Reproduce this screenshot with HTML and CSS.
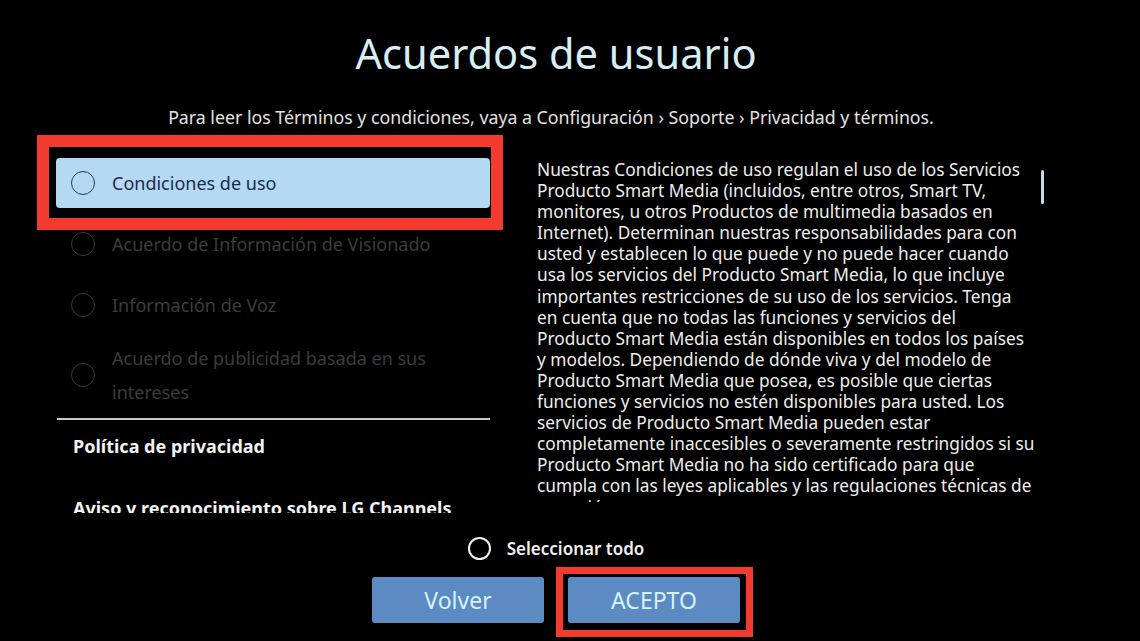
FILE: index.html
```html
<!DOCTYPE html>
<html lang="es">
<head>
  <meta charset="UTF-8">
  <meta name="viewport" content="width=device-width, initial-scale=1.0">
  <title>Acuerdos de usuario</title>
  <link rel="stylesheet" href="styles.css">
</head>
<body>
  <div class="screen">
    <h1 class="title">Acuerdos de usuario</h1>
    <p class="hint">Para leer los Términos y condiciones, vaya a Configuración › Soporte › Privacidad y términos.</p>

    <div class="content">
      <!-- Agreement list -->
      <div class="agreements">
        <div class="item focused">
          <span class="radio"></span>
          <span class="label">Condiciones de uso</span>
        </div>
        <div class="item disabled">
          <span class="radio"></span>
          <span class="label">Acuerdo de Información de Visionado</span>
        </div>
        <div class="item disabled">
          <span class="radio"></span>
          <span class="label">Información de Voz</span>
        </div>
        <div class="item disabled tall">
          <span class="radio"></span>
          <span class="label">Acuerdo de publicidad basada en sus<br>intereses</span>
        </div>
        <div class="divider"></div>
        <div class="section">Política de privacidad</div>
        <div class="section">Aviso y reconocimiento sobre LG Channels</div>
      </div>

      <!-- Terms text -->
      <div class="terms">
        Nuestras Condiciones de uso regulan el uso de los Servicios<br>
        Producto Smart Media (incluidos, entre otros, Smart TV,<br>
        monitores, u otros Productos de multimedia basados en<br>
        Internet). Determinan nuestras responsabilidades para con<br>
        usted y establecen lo que puede y no puede hacer cuando<br>
        usa los servicios del Producto Smart Media, lo que incluye<br>
        importantes restricciones de su uso de los servicios. Tenga<br>
        en cuenta que no todas las funciones y servicios del<br>
        Producto Smart Media están disponibles en todos los países<br>
        y modelos. Dependiendo de dónde viva y del modelo de<br>
        Producto Smart Media que posea, es posible que ciertas<br>
        funciones y servicios no estén disponibles para usted. Los<br>
        servicios de Producto Smart Media pueden estar<br>
        completamente inaccesibles o severamente restringidos si su<br>
        Producto Smart Media no ha sido certificado para que<br>
        cumpla con las leyes aplicables y las regulaciones técnicas de<br>
        su región.
      </div>
      <div class="scrollbar"><div class="thumb"></div></div>
    </div>

    <div class="footer">
      <div class="select-all">
        <span class="radio"></span>
        <span>Seleccionar todo</span>
      </div>
      <div class="buttons">
        <button class="btn">Volver</button>
        <button class="btn marked">ACEPTO</button>
      </div>
    </div>
  </div>
</body>
</html>
```

FILE: styles.css
```css
body {
  margin: 0;
  background: #000;
  color: #e8e8e8;
  font-family: "Noto Sans", sans-serif;
  overflow: hidden;
}
.screen {
  width: 1140px;
  height: 641px;
  overflow: hidden;
}
.title {
  width: 1112px;
  margin: 33px 0 0;
  text-align: center;
  font-weight: normal;
  font-size: 41.6px;
  line-height: 40px;
  color: #d6eef4;
}
.hint {
  width: 1102px;
  margin: 34px 0 0;
  text-align: center;
  font-size: 17.75px;
  line-height: 20px;
  color: #e2e2e2;
}

/* Main two columns */
.content {
  display: flex;
  height: 378px;
  margin-top: 8px;
}
.agreements {
  width: 434px;
  margin-left: 37px;
  padding: 23px 13px 0 19px;
  overflow: hidden;
  flex-shrink: 0;
}
.item {
  position: relative;
  display: flex;
  align-items: center;
  height: 50px;
  margin-bottom: 11px;
  border-radius: 4px;
  font-size: 18px;
}
.item .radio {
  width: 22px;
  height: 22px;
  margin: 0 17px 0 15px;
  border: 1.5px solid #3a3a3a;
  border-radius: 50%;
  flex-shrink: 0;
}
.item.focused {
  background: #b5d8f3;
  color: #1c2c4a;
}
.item.focused .radio {
  border-color: #2a3a58;
}
/* red annotation frame */
.item.focused:after {
  content: "";
  position: absolute;
  top: -23px;
  left: -19px;
  right: -13px;
  bottom: -22px;
  border: 12px solid #f23a2f;
}
.item.disabled {
  color: #3c3c3c;
}
.item.tall {
  height: 68px;
  line-height: 34px;
  margin-bottom: 9px;
}
.divider {
  height: 2px;
  background: #c9c9c9;
  margin-left: 1px;
}
.section {
  padding: 9px 0 19px 17px;
  line-height: 34px;
  font-size: 18px;
  font-weight: bold;
  color: #f2f2f2;
  white-space: nowrap;
}

.terms {
  width: 500px;
  height: 343px;
  margin: 23px 0 0 34px;
  padding-top: 1px;
  overflow: hidden;
  font-size: 17.3px;
  line-height: 21.1px;
  color: #ededed;
  white-space: nowrap;
  flex-shrink: 0;
}
.scrollbar {
  width: 3px;
  margin-left: 4px;
  padding-top: 35px;
}
.thumb {
  height: 34px;
  background: #c6dceb;
  border-radius: 2px;
}

/* Footer */
.footer {
  width: 1112px;
  display: flex;
  flex-direction: column;
  align-items: center;
}
.select-all {
  display: flex;
  align-items: center;
  gap: 16px;
  margin-top: 24px;
  font-size: 17px;
  font-weight: 600;
  color: #f0f0f0;
}
.select-all .radio {
  width: 19px;
  height: 19px;
  border: 2px solid #f0f0f0;
  border-radius: 50%;
}
.buttons {
  display: flex;
  gap: 24px;
  margin-top: 17px;
}
.btn {
  position: relative;
  width: 172px;
  height: 46px;
  border: none;
  border-radius: 3px;
  background: #5b8bc2;
  color: #d6f2f8;
  font-family: "Noto Sans", sans-serif;
  font-size: 23px;
  padding: 0;
}
.btn.marked:after {
  content: "";
  position: absolute;
  top: -10px;
  left: -12px;
  right: -13px;
  bottom: -14px;
  border: 7px solid #f23a2f;
}
```
